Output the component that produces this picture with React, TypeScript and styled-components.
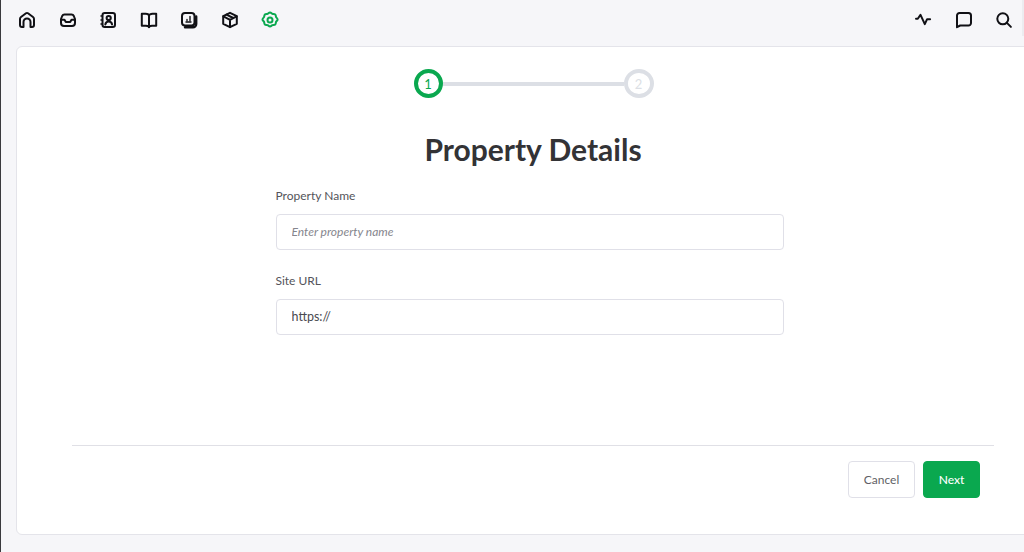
import styled, { createGlobalStyle } from 'styled-components';

const GlobalStyle = createGlobalStyle`
  html, body {
    margin: 0;
    padding: 0;
    background: #f6f6f9;
    font-family: Lato, "Liberation Sans", sans-serif;
  }
`;

const Page = styled.div`
  width: 1024px;
  height: 552px;
  overflow: hidden;
  display: flex;
  flex-direction: column;
  background: #f6f6f9;
  border-left: 1px solid #3a3a3e;
  box-sizing: border-box;
`;

const Toolbar = styled.div`
  position: relative;
  height: 46px;
  flex-shrink: 0;
  display: flex;
  align-items: center;
  justify-content: space-between;
  padding: 0 10px 6px 16px;
  box-sizing: border-box;

  &::after {
    content: '';
    position: absolute;
    top: 0;
    right: 0;
    width: 2px;
    height: 36px;
    background: #ececf0;
  }
`;

const IconGroup = styled.div`
  display: flex;
  align-items: center;
  gap: 20.5px;
`;

const IconSlot = styled.span<{ $active?: boolean }>`
  width: 20px;
  height: 20px;
  display: flex;
  color: ${(p) => (p.$active ? '#0aa84f' : '#111116')};
`;

const Card = styled.div`
  width: 1034px;
  height: 489px;
  flex-shrink: 0;
  margin-left: 15px;
  box-sizing: border-box;
  background: #fff;
  border: 1px solid #e4e4ea;
  border-radius: 6px;
  padding: 22px 55px 0;
  display: flex;
  flex-direction: column;
  align-items: center;
`;

const Stepper = styled.div`
  display: flex;
  align-items: center;
  margin-left: 1px;
`;

const StepCircle = styled.div<{ $active?: boolean }>`
  width: ${(p) => (p.$active ? '29px' : '30px')};
  height: 29px;
  box-sizing: border-box;
  border-radius: 50%;
  border: 4px solid ${(p) => (p.$active ? '#0aa84f' : '#dcdfe5')};
  color: ${(p) => (p.$active ? '#0aa84f' : '#dcdfe5')};
  display: flex;
  align-items: center;
  justify-content: center;
  font-size: 13px;
  font-weight: 400;
`;

const StepLine = styled.div`
  width: 181px;
  height: 4px;
  background: #dcdfe5;
`;

const Title = styled.h1`
  margin: 29px 0 0;
  font-size: 30px;
  line-height: 44px;
  font-weight: 700;
  color: #333336;
`;

const Form = styled.form`
  width: 508px;
  margin: 16px 0 0 -7px;
  display: flex;
  flex-direction: column;
  gap: 22px;
  height: 258px;
`;

const Field = styled.div`
  display: flex;
  flex-direction: column;
  gap: 9px;
`;

const Label = styled.label`
  font-size: 12px;
  line-height: 18px;
  color: #54545a;
`;

const Input = styled.input`
  width: 100%;
  height: 36px;
  box-sizing: border-box;
  border: 1px solid #e0e0e8;
  border-radius: 4px;
  padding: 0 15px 2px;
  background: #fff;
  font-family: inherit;
  font-size: 12.500px;
  color: #4a4a50;
  outline: none;

  &::placeholder {
    color: #85858d;
    font-size: 12px;
    font-style: italic;
    opacity: 1;
  }
`;

const Footer = styled.div`
  align-self: stretch;
  border-top: 1px solid #e0e0e6;
  padding: 15px 14px 0 0;
  display: flex;
  justify-content: flex-end;
  gap: 8px;
`;

const Button = styled.button<{ $primary?: boolean }>`
  height: 37px;
  box-sizing: border-box;
  border-radius: 4px;
  border: 1px solid ${(p) => (p.$primary ? '#0aa84f' : '#e0e0e8')};
  background: ${(p) => (p.$primary ? '#0aa84f' : '#fff')};
  color: ${(p) => (p.$primary ? '#fff' : '#5f5f66')};
  width: ${(p) => (p.$primary ? '57px' : '67px')};
  font-family: inherit;
  font-size: 12px;
  font-weight: ${(p) => (p.$primary ? 500 : 400)};
  padding: 0 0 1px;
`;

const svgProps = {
  width: 20,
  height: 20,
  viewBox: '0 0 20 20',
  fill: 'none',
  stroke: 'currentColor',
  strokeWidth: 2,
  strokeLinecap: 'round' as const,
  strokeLinejoin: 'round' as const,
};

const HomeIcon = () => (
  <svg {...svgProps}>
    <path d="M3 15V9a2.500 2.500 0 0 1 1-2l5-3.700a1.700 1.700 0 0 1 2 0L16 7a2.500 2.500 0 0 1 1 2v6a2 2 0 0 1-2 2h-1.500v-5a3.500 3.500 0 0 0-7 0v5H5a2 2 0 0 1-2-2z" />
  </svg>
);

const InboxIcon = () => (
  <svg {...svgProps}>
    <path d="M6.500 4.500h7a2.500 2.500 0 0 1 2.300 1.500l1.200 3v4a3 3 0 0 1-3 3H6a3 3 0 0 1-3-3V9l1.200-3a2.500 2.500 0 0 1 2.300-1.500z" />
    <path d="M3.200 9.800h3.300l1.300 2.200h4.400l1.300-2.200h3.300" />
  </svg>
);

const ContactIcon = () => (
  <svg {...svgProps}>
    <rect x="4.500" y="3" width="12.500" height="14" rx="2.200" />
    <circle cx="10.700" cy="8" r="2.100" />
    <path d="M7.300 14.500c.4-2 1.700-2.900 3.400-2.900s3 .9 3.400 2.900" />
    <path d="M3 6h1.500M3 10h1.500M3 14h1.500" strokeWidth={1.500} />
  </svg>
);

const BookIcon = () => (
  <svg {...svgProps}>
    <path d="M2.800 3.800h3.700c1.700 0 3.500.8 3.500 2.200 0-1.400 1.800-2.200 3.500-2.200h3.700v12H13c-1.500 0-3 .4-3 1.400 0-1-1.500-1.400-3-1.400H2.800z" />
    <path d="M10 6v11" />
  </svg>
);

const ReportIcon = () => (
  <svg {...svgProps}>
    <rect x="3" y="3" width="12.500" height="12.500" rx="3" />
    <path d="M7 12h5M8 9.500v1M11 6.500v4" strokeWidth={1.400} />
    <path d="M17.200 6.500v7.500a3.300 3.300 0 0 1-3.300 3.300H6" strokeWidth={2.400} />
  </svg>
);

const PackageIcon = () => (
  <svg {...svgProps}>
    <path d="M10 2.800l6.800 3.400v7.600L10 17.200l-6.800-3.400V6.200z" />
    <path d="M3.400 6.400L10 9.800l6.600-3.400M10 9.800v7.200M6.500 4.600l6.700 3.400" />
  </svg>
);

const GearIcon = () => (
  <svg {...svgProps}>
    <path d="M10 2.600c1.200 0 1.600 1 2.400 1.300s1.900-.2 2.800.6.500 1.800.9 2.600 1.500 1.200 1.500 2.400-1.100 1.500-1.500 2.300-.1 1.900-.9 2.700-1.900.3-2.800.7-1.200 1.400-2.400 1.400-1.500-1-2.400-1.400-1.900.1-2.700-.7-.5-1.900-.9-2.700-1.500-1.100-1.500-2.300 1.100-1.600 1.500-2.400.1-1.800.9-2.600 1.900-.3 2.700-.6S8.800 2.600 10 2.600z" />
    <circle cx="10" cy="10" r="2.500" />
  </svg>
);

const ActivityIcon = () => (
  <svg {...svgProps}>
    <path d="M3 8.800h1.800L7.500 4.800l4.300 9.400 2.300-5h3" />
  </svg>
);

const ChatIcon = () => (
  <svg {...svgProps}>
    <path d="M3 5.500A2.500 2.500 0 0 1 5.500 3h9A2.500 2.500 0 0 1 17 5.500v7.500a2.500 2.500 0 0 1-2.500 2.500H6.200L3 17.200z" />
  </svg>
);

const SearchIcon = () => (
  <svg {...svgProps}>
    <circle cx="8.800" cy="8.800" r="5.500" />
    <path d="M12.900 12.900l4 4" />
  </svg>
);

const leftIcons = [
  <HomeIcon />,
  <InboxIcon />,
  <ContactIcon />,
  <BookIcon />,
  <ReportIcon />,
  <PackageIcon />,
];

const App = () => {
  return (
    <Page>
      <GlobalStyle />
      <Toolbar>
        <IconGroup>
          {leftIcons.map((icon, i) => (
            <IconSlot key={i}>{icon}</IconSlot>
          ))}
          <IconSlot $active>
            <GearIcon />
          </IconSlot>
        </IconGroup>
        <IconGroup>
          <IconSlot>
            <ActivityIcon />
          </IconSlot>
          <IconSlot>
            <ChatIcon />
          </IconSlot>
          <IconSlot>
            <SearchIcon />
          </IconSlot>
        </IconGroup>
      </Toolbar>
      <Card>
        <Stepper>
          <StepCircle $active>1</StepCircle>
          <StepLine />
          <StepCircle>2</StepCircle>
        </Stepper>
        <Title>Property Details</Title>
        <Form>
          <Field>
            <Label>Property Name</Label>
            <Input placeholder="Enter property name" />
          </Field>
          <Field>
            <Label>Site URL</Label>
            <Input defaultValue="https://" />
          </Field>
        </Form>
        <Footer>
          <Button type="button">Cancel</Button>
          <Button type="button" $primary>
            Next
          </Button>
        </Footer>
      </Card>
    </Page>
  );
};

export default App;
